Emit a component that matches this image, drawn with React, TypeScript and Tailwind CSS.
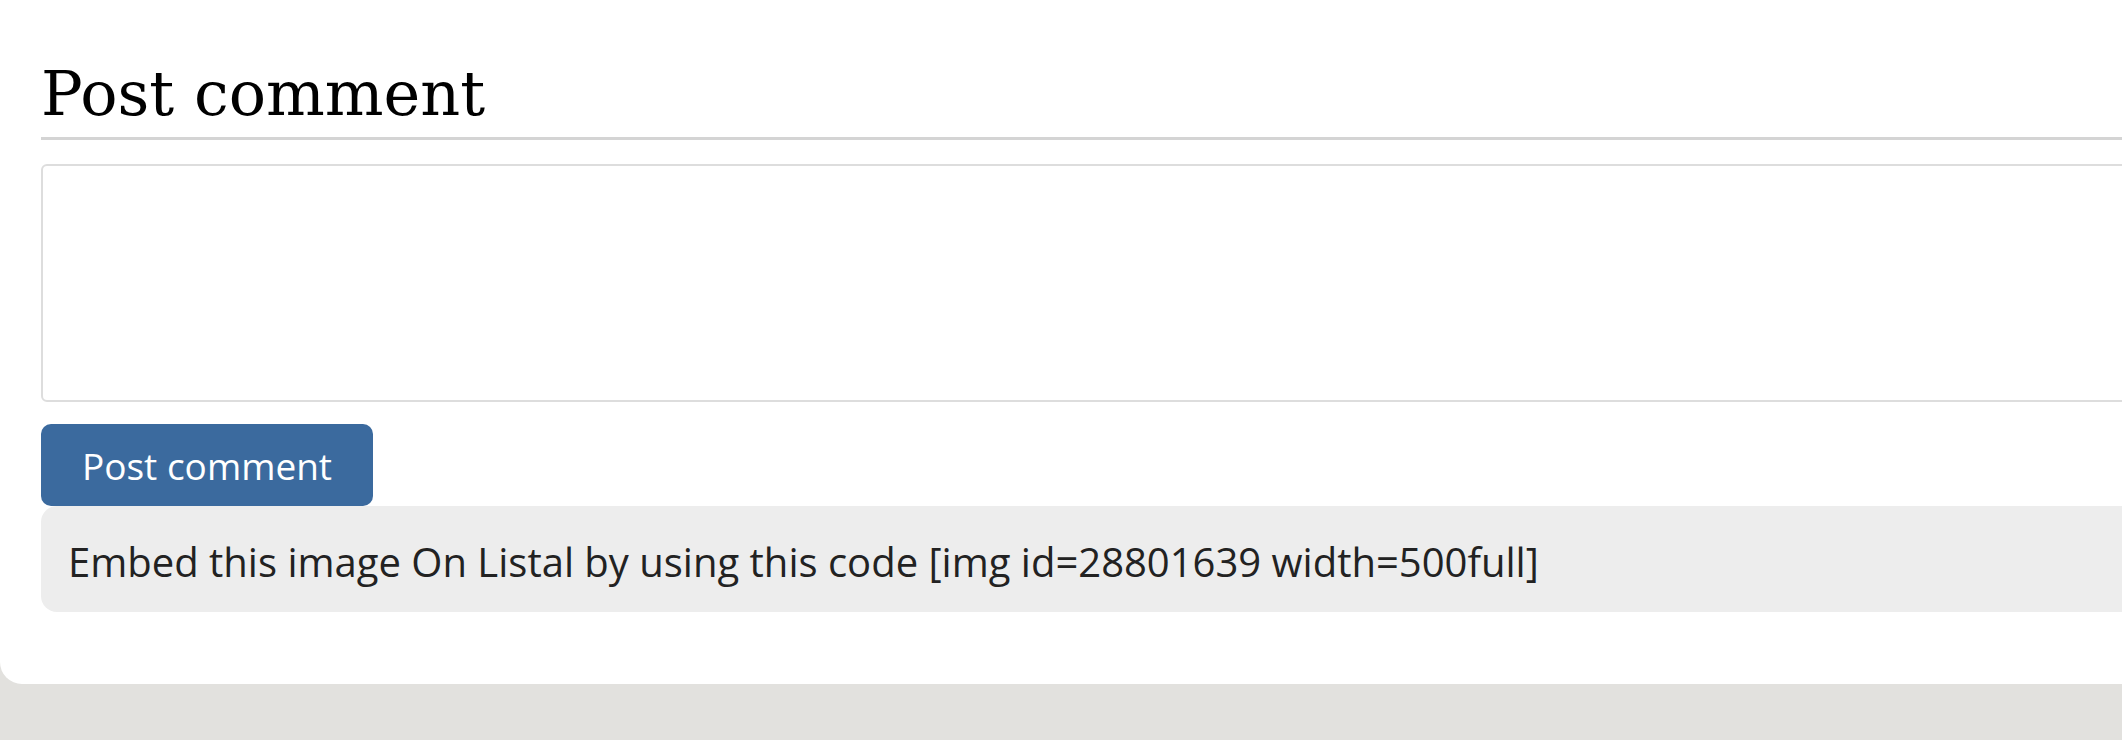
import React from "react";

export default function App() {
  return (
    <div className="w-[2122px] h-[740px] overflow-hidden bg-[#e2e1de]">
      <div className="bg-white rounded-bl-[22px] pl-[41px] pt-[58px] pb-[72px] w-[2122px]">
        <h2
          className="text-[62px] leading-[72px] text-black border-b-[3px] border-[#d4d4d4] pb-[7px]"
          style={{ fontFamily: '"DejaVu Serif", "Liberation Serif", serif' }}
        >
          Post comment
        </h2>
        <div className="mt-[24px] w-[2200px] h-[238px] border-2 border-[#dddddd] rounded-[6px] bg-white" />
        <div style={{ fontFamily: '"Open Sans", "Noto Sans", sans-serif' }}>
          <button className="mt-[22px] w-[332px] h-[82px] bg-[#3b6a9e] rounded-[10px] text-white text-[37px] leading-none flex items-center justify-center">
            Post comment
          </button>
          <div className="w-[2200px] h-[106px] bg-[#ededed] rounded-l-[16px] flex items-center pl-[27px] pt-[6px] text-[40px] font-medium text-[#222222]">
            Embed this image On Listal by using this code [img id=28801639 width=500full]
          </div>
        </div>
      </div>
    </div>
  );
}
